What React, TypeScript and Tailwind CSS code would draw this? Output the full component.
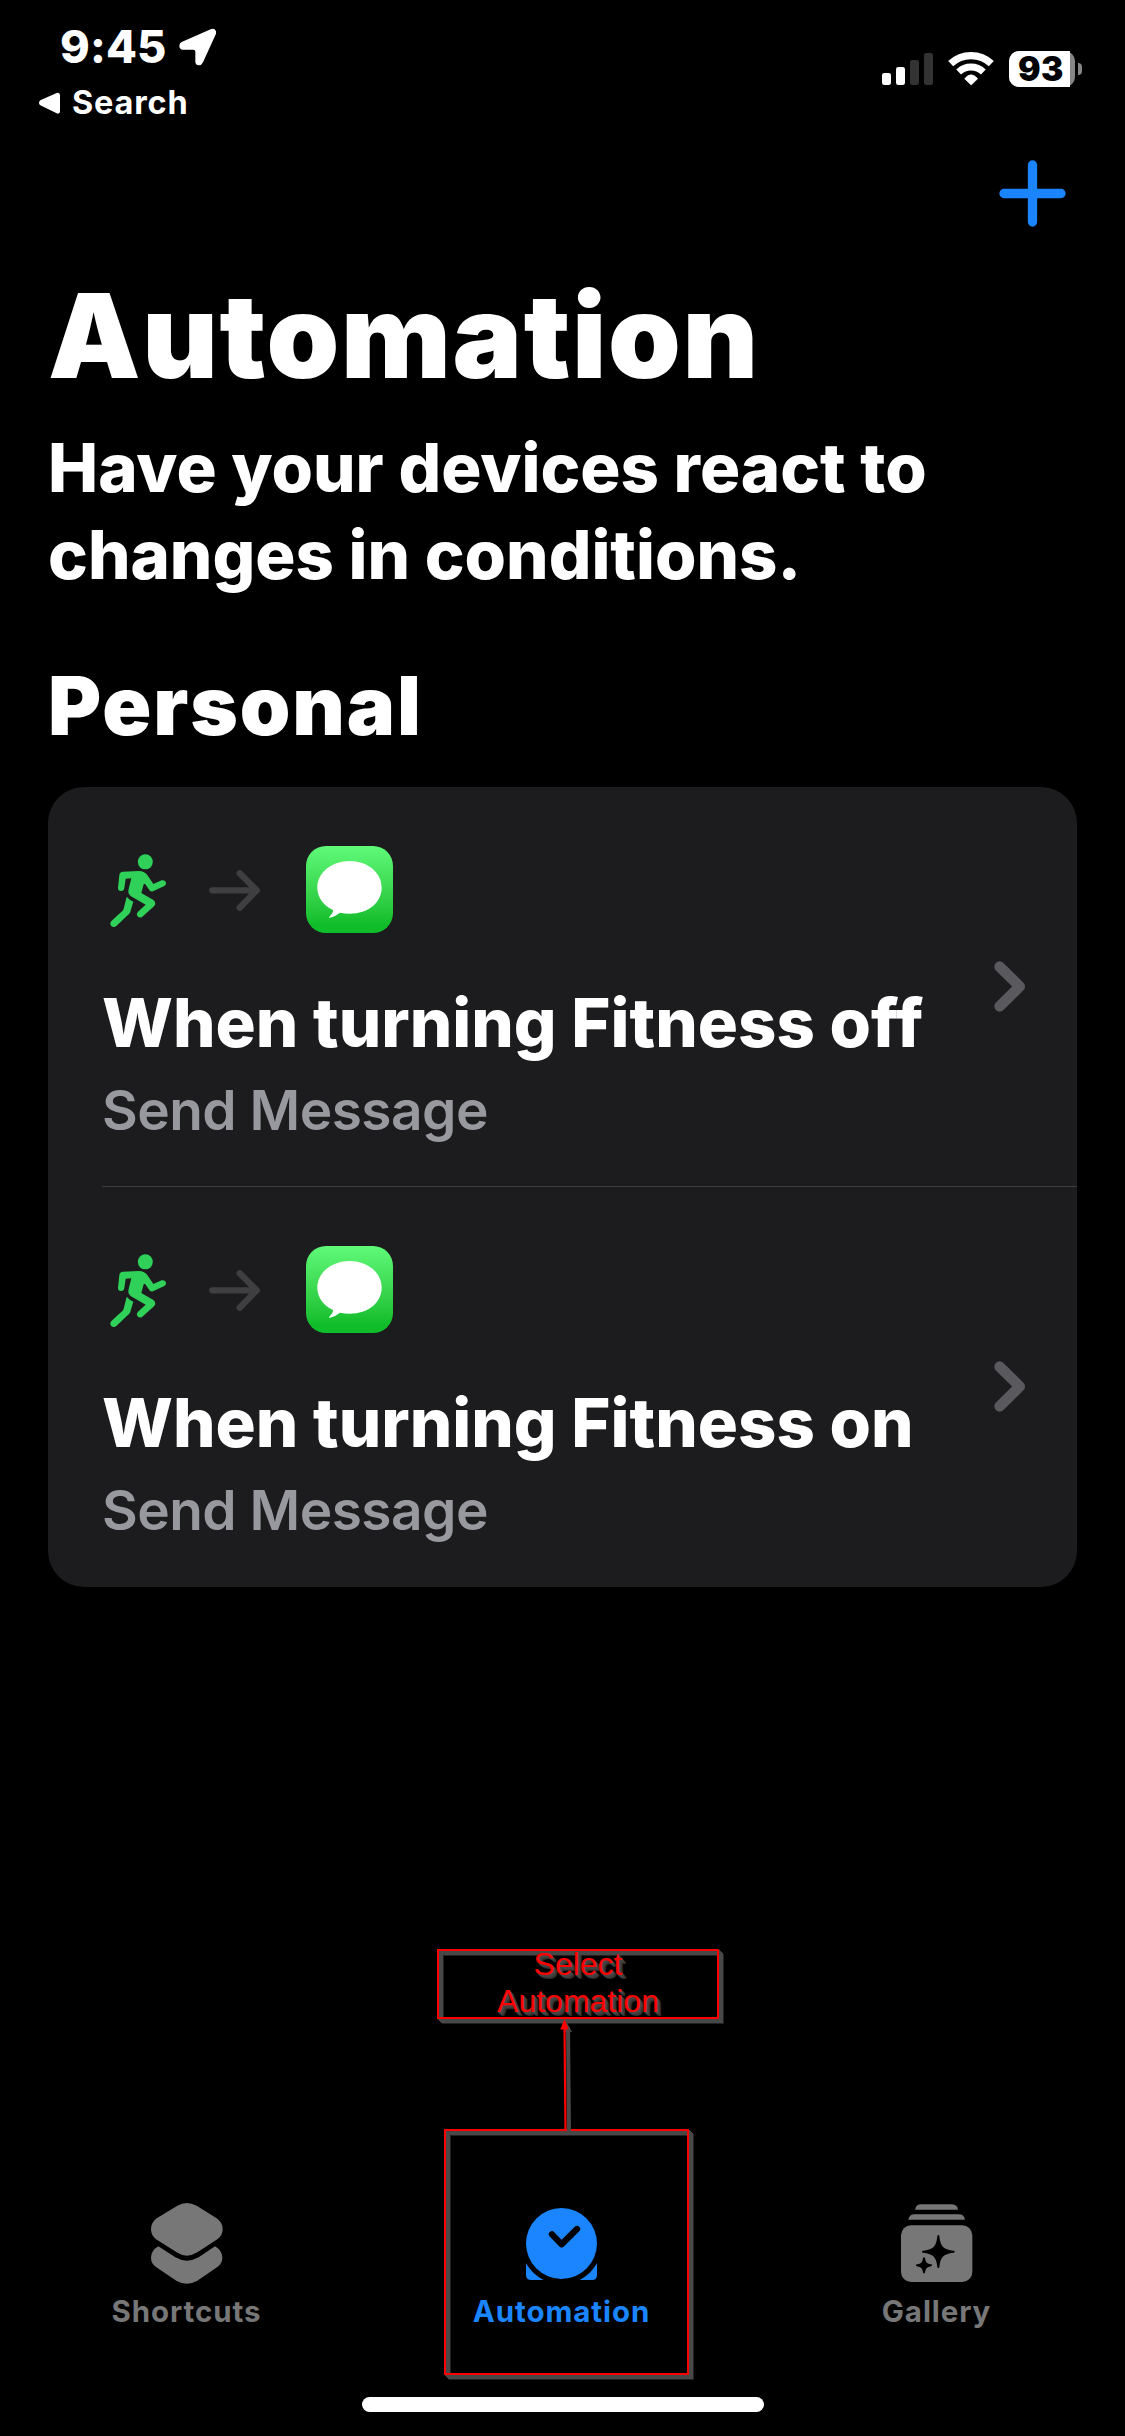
import type { ReactNode } from "react";

function StatusBar() {
  return (
    <header className="flex h-[140px] shrink-0 justify-between pt-6">
      <div className="flex flex-col gap-[13px]">
        <div className="flex h-[46px] items-center pl-[60px]">
          <span className="w-[119px] text-[45px] leading-[46px] font-extrabold tracking-[0.13px]">9:45</span>
          <svg className="h-[38px] w-[38px]" viewBox="537 85 114 114" fill="currentColor">
            <path d="M632 89Q639 86 644 89Q650 94 648 102L609 188Q604 198 596 197Q586 195 586 186V156Q586 150 580 150H549Q538 149 538 138Q538 131 545 127Z" />
          </svg>
        </div>
        <div className="flex h-10 items-center pl-[38px]">
          <svg className="h-[22px] w-[34px]" viewBox="114 274 102 66" fill="currentColor">
            <path d="M121 299L170 277Q180 274 180 284V330Q180 341 170 338L121 314Q113 307 121 299Z" />
          </svg>
          <span className="text-[32.5px] leading-10 font-bold tracking-[0.8px]">Search</span>
        </div>
      </div>
      <div className="mt-[27px] flex h-9 items-center pr-[43px]">
        <svg className="h-9 w-[127px]" viewBox="93 153 381 108" fill="currentColor">
          <rect x="96" y="219" width="27" height="36" rx="7" />
          <rect x="138" y="201" width="27" height="54" rx="7" />
          <rect x="180" y="180" width="27" height="75" rx="7" fill="#333" />
          <rect x="222" y="159" width="27" height="96" rx="7" fill="#333" />
          <path d="M302 191A89 89 0 0 1 424 191" fill="none" stroke="currentColor" strokeWidth="22" />
          <path d="M326 216A54 54 0 0 1 400 216" fill="none" stroke="currentColor" strokeWidth="21" />
          <path d="M363.500 255L344 236Q363 213 383 236Z" stroke="currentColor" strokeWidth="2" strokeLinejoin="round" />
        </svg>
        <div className="ml-px flex h-9 w-[66px] rounded-[10px] bg-[#858585]">
          <span className="w-[61px] rounded-l-[10px] bg-white pl-[9px] text-[33.5px] leading-9 font-black tracking-[0.39px] text-black">93</span>
        </div>
        <span className="ml-[3px] h-3 w-1 rounded-r-full bg-[#858585]" />
      </div>
    </header>
  );
}

function Runner() {
  return (
    <svg className="h-[74px] w-[57px]" viewBox="60 70 171 222" fill="#30d158">
      <circle cx="166" cy="93.500" r="22.500" />
      <path d="M84 172L88 133Q89 124 99 123L146 121Q164 121 174 136L190 160L215 149Q223 147 227 153Q230 161 223 166L189 182Q182 184 178 178L165 159L161 161L154 187L189 207Q201 216 192 227L157 258Q149 264 142 256Q138 249 144 243L167 222L123 197Q112 189 116 175L124 143L107 144L103 172Q102 181 93 181Q84 181 84 172Z" />
      <path d="M110 198Q118 208 130 213L121 243Q119 249 113 254L79 286Q71 293 63 285Q58 277 65 270L97 241Q100 238 101 234Z" />
    </svg>
  );
}

function MessagesIcon() {
  return (
    <span className="flex size-[87px] items-center justify-center rounded-[20px] bg-linear-to-b from-[#5ffa78] to-[#0fbd2a] to-90%">
      <svg className="size-[87px]" viewBox="648 48 261 261" fill="#fff">
        <path d="M779 93C832 93 875 127 875 173C875 217 835 251 779 251Q764 251 750 248Q736 260 718 264Q716 262 720 258Q730 248 729 240C700 226 682 201 682 173C682 127 726 93 779 93Z" />
      </svg>
    </span>
  );
}

function AutomationRow({ title, subtitle }: { title: string; subtitle: string }) {
  return (
    <li className="group flex h-[400px] pl-[54px]">
      <div className="flex flex-1 items-center justify-between border-b border-[#3d3d40] pr-[51px] group-last:border-transparent">
        <div className="flex h-full flex-col pt-[59px]">
          <div className="flex h-[87px] items-center">
            <span className="ml-2 flex w-[99px] pt-[2px]"><Runner /></span>
            <svg className="mt-[2px] mr-[44px] h-[43px] w-[53px]" viewBox="356 118 159 129" fill="none" stroke="#3f3f41" strokeWidth="19" strokeLinecap="round" strokeLinejoin="round">
              <path d="M366 182H499M448 131L499 182L448 234" />
            </svg>
            <MessagesIcon />
          </div>
          <h3 className="mt-[50px] text-[67px] leading-[80px] font-extrabold tracking-[0.02px]">{title}</h3>
          <p className="mt-[14px] text-[55px] leading-[66px] font-semibold tracking-[-0.53px] text-[#98989f]">{subtitle}</p>
        </div>
        <svg className="h-[51px] w-8" viewBox="284 574 96 153" fill="none" stroke="#5a5a5e" strokeWidth="32" strokeLinecap="round" strokeLinejoin="round">
          <path d="M301 591L361 650.500L301 710" />
        </svg>
      </div>
    </li>
  );
}

function Tab({ label, color, children }: { label: string; color: string; children: ReactNode }) {
  return (
    <div className={`flex flex-1 flex-col items-center pr-[2px] ${color}`}>
      <div className="h-[90px]">{children}</div>
      <span className="mt-[5px] text-[29.5px] leading-9 font-bold tracking-[0.9px]">{label}</span>
    </div>
  );
}

function TabBar() {
  return (
    <nav className="flex h-[199px] shrink-0">
      <Tab label="Shortcuts" color="text-[#777777]">
        <svg className="h-[90px] w-[74px]" viewBox="180 54 222 270" fill="currentColor">
          <path d="M262 77Q290 61 320 77L380 115Q398 127 398 148Q398 166 382 178L322 217Q290 237 260 217L198 178Q183 166 183 148Q183 127 200 115Z" />
          <path d="M205 199L256 232Q290 252 326 232L375 199Q397 212 397 233Q397 251 381 262L322 302Q290 320 259 302L199 262Q183 251 183 233Q183 212 205 199Z" />
        </svg>
      </Tab>
      <Tab label="Automation" color="text-[#1a85ff]">
        <svg className="h-[90px] w-[74px]" viewBox="315 264 222 270" fill="currentColor">
          <circle cx="424.500" cy="400.500" r="106.500" />
          <path d="M396 373L425 403L471 357" fill="none" stroke="#000" strokeWidth="19" strokeLinecap="round" strokeLinejoin="round" />
          <path d="M318 460Q337 493 371 510H334Q318 510 318 494Z" />
          <path d="M531 460Q512 493 479 510H516Q531 510 531 494Z" />
        </svg>
      </Tab>
      <Tab label="Gallery" color="text-[#777777]">
        <svg className="h-[90px] w-[74px]" viewBox="120 54 222 270" fill="currentColor">
          <path d="M165 89Q168 73 184 73H276Q292 74 294 89Z" />
          <path d="M145 119Q148 103 164 103H296Q312 103 315 119Z" />
          <rect x="123" y="136" width="214" height="170" rx="30" />
          <g fill="#000" stroke="#000" strokeWidth="6" strokeLinejoin="round">
            <path d="M235 168C238 200 247 211 281 215C247 219 238 230 235 261C232 230 223 219 189 215C223 211 232 200 235 168Z" />
            <path d="M192 235C194 249 199 254 213 256C199 258 194 263 192 277C190 263 185 258 171 256C185 254 190 249 192 235Z" />
          </g>
        </svg>
      </Tab>
    </nav>
  );
}

const frame =
  "absolute border-2 border-[#ff0000] shadow-[1px_1px_#484848,2px_2px_#484848,3px_3px_#484848,4px_4px_#484848,5px_5px_#222,inset_4px_4px_#484848,inset_5px_5px_#222]";

function Callout() {
  return (
    <>
      <div className={`${frame} top-[1949px] left-[437px] h-[70px] w-[282px]`}>
        <p className="-mt-[5px] text-center font-['Liberation_Sans',sans-serif] text-[32px] leading-[36.7px] text-[#ff0000] [text-shadow:1px_1px_#444,2px_2px_#444,3px_3px_#3a3a3a,4px_4px_#2a2a2a]">
          Select
          <br />
          Automation
        </p>
      </div>
      <div className={`${frame} top-[2129px] left-[444px] h-[246px] w-[245px]`} />
      <svg className="absolute top-[2018px] left-[555px] h-[113px] w-6" viewBox="0 0 24 113">
        <path d="M13 9L14 113" stroke="#484848" strokeWidth="4" />
        <path d="M11 3L17 14H10Z" fill="#484848" />
        <path d="M9.500 8L10.500 112" stroke="#ff0000" strokeWidth="2.200" />
        <path d="M9.500 1L13.700 11.500H5.300Z" fill="#ff0000" />
      </svg>
    </>
  );
}

export default function App() {
  return (
    <div className="relative flex h-[2436px] w-[1125px] flex-col overflow-hidden bg-black font-['Inter',sans-serif] text-white">
      <StatusBar />
      <div className="flex h-[136px] shrink-0 items-start justify-end pt-5 pr-[59px]">
        <svg className="size-[67px]" viewBox="0 0 67 67" stroke="#1a85ff" strokeWidth="9.300" strokeLinecap="round">
          <path d="M5 33.500H62M33.500 5V62" />
        </svg>
      </div>
      <main className="flex flex-1 flex-col px-12">
        <h1 className="text-[116.5px] leading-[120px] font-black tracking-[1.64px]">Automation</h1>
        <p className="mt-[28px] text-[67px] leading-[87px] font-extrabold">
          Have your devices react to
          <br />
          changes in conditions.
        </p>
        <h2 className="mt-[63px] text-[81px] leading-[90px] font-black tracking-[1.9px]">Personal</h2>
        <ul className="mt-9 rounded-[36px] bg-[#1c1c1e]">
          <AutomationRow title="When turning Fitness off" subtitle="Send Message" />
          <AutomationRow title="When turning Fitness on" subtitle="Send Message" />
        </ul>
      </main>
      <TabBar />
      <div className="mb-6 h-[15px] w-[402px] shrink-0 self-center rounded-full bg-white" />
      <Callout />
    </div>
  );
}
